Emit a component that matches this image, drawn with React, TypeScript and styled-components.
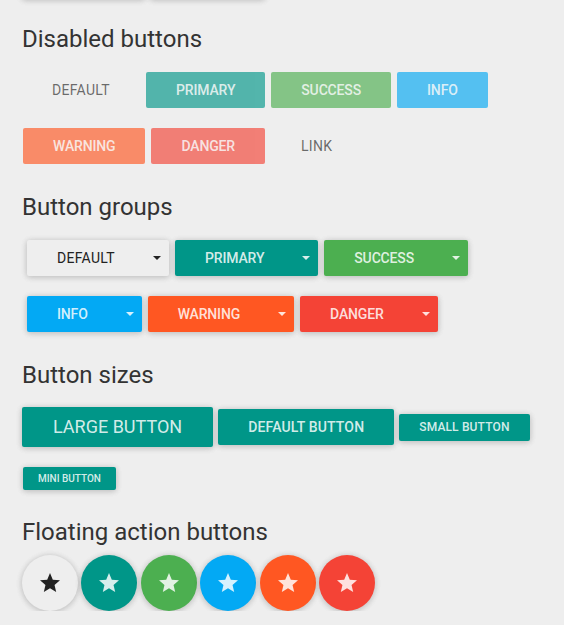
import styled, { createGlobalStyle } from "styled-components";

type Variant = "default" | "primary" | "success" | "info" | "warning" | "danger" | "link";
type Size = "lg" | "md" | "sm" | "xs";

const colors: Record<Variant, string> = {
  default: "#eeeeee",
  primary: "#009688",
  success: "#4caf50",
  info: "#03a9f4",
  warning: "#ff5722",
  danger: "#f44336",
  link: "transparent",
};

const isLight = (v: Variant) => v === "default" || v === "link";

const textColor = (v: Variant) => (isLight(v) ? "rgba(0, 0, 0, 0.87)" : "rgba(255, 255, 255, 0.84)");

// light buttons use a thinner, slightly tracked label
const labelFont = (v: Variant) =>
  isLight(v) ? "font-weight: 400; letter-spacing: 0.3px;" : "font-weight: 500; letter-spacing: -0.15px;";

const sizes: Record<Size, string> = {
  lg: "padding: 8px 31px; font-size: 18px; line-height: 24px; font-weight: 400; letter-spacing: 0;",
  md: "padding: 8px 30px; font-size: 14px; line-height: 20px;",
  sm: "padding: 5px 20px; font-size: 12px; line-height: 17px; letter-spacing: 0.15px;",
  xs: "padding: 4px 15px; font-size: 10px; line-height: 15px; letter-spacing: 0;",
};

const shadow = "0 1px 6px 0 rgba(0, 0, 0, 0.12), 0 1px 6px 0 rgba(0, 0, 0, 0.12)";

const GlobalStyle = createGlobalStyle`
  body {
    margin: 0;
    background: #eeeeee;
    font-family: Roboto, "Liberation Sans", sans-serif;
    overflow: hidden;
  }
`;

const Page = styled.div`
  display: flex;
  flex-direction: column;
  padding: 0 22px;
`;

const Heading = styled.h3<{ $top: number }>`
  margin: ${(p) => p.$top}px 0 0;
  font-size: 24px;
  font-weight: 400;
  line-height: 28px;
  color: #333333;
`;

const Row = styled.div<{ $top: number; $indent?: number; $gap?: number }>`
  display: flex;
  flex-wrap: wrap;
  align-items: center;
  gap: ${(p) => p.$gap ?? 6}px;
  margin-top: ${(p) => p.$top}px;
  padding-left: ${(p) => p.$indent ?? 0}px;
`;

// bottom edge of the previous section's buttons, scrolled just out of view
const ScrolledStub = styled.div<{ $w: number }>`
  width: ${(p) => p.$w}px;
  height: 36px;
  border-radius: 2px;
  background: #eeeeee;
  box-shadow: ${shadow};
`;

const Button = styled.button<{
  $variant: Variant;
  $flat?: boolean;
  $size?: Size;
  $off?: boolean;
  $tracked?: boolean;
}>`
  border: 0;
  border-radius: 2px;
  margin: 0;
  font-family: inherit;
  text-transform: uppercase;
  white-space: nowrap;
  cursor: pointer;
  ${(p) => labelFont(p.$variant)}
  ${(p) => sizes[p.$size ?? "md"]}
  ${(p) => (p.$tracked ? "letter-spacing: 0.15px;" : "")}
  background: ${(p) => (p.$flat ? "transparent" : colors[p.$variant])};
  color: ${(p) => textColor(p.$variant)};
  box-shadow: ${(p) => (p.$flat || p.$off ? "none" : shadow)};
  opacity: ${(p) => (p.$off ? 0.65 : 1)};
`;

const Group = styled.div<{ $variant: Variant }>`
  display: flex;
  border-radius: 2px;
  background: ${(p) => colors[p.$variant]};
  color: ${(p) => (isLight(p.$variant) ? "#222222" : "rgba(255, 255, 255, 0.84)")};
  box-shadow: ${shadow};
`;

const GroupMain = styled.span<{ $variant: Variant }>`
  padding: 8px 30px;
  font-size: 14px;
  line-height: 20px;
  text-transform: uppercase;
  ${(p) => labelFont(p.$variant)}
`;

const GroupToggle = styled.span`
  display: flex;
  align-items: center;
  justify-content: center;
  width: 24px;
`;

const Caret = styled.span`
  width: 0;
  height: 0;
  border-top: 4px solid currentColor;
  border-left: 4px solid transparent;
  border-right: 4px solid transparent;
`;

const Fab = styled.button<{ $variant: Variant }>`
  display: flex;
  align-items: center;
  justify-content: center;
  width: 56px;
  height: 56px;
  padding: 0;
  border: 0;
  border-radius: 50%;
  background: ${(p) => colors[p.$variant]};
  color: ${(p) => (p.$variant === "default" ? "#222222" : "rgba(255, 255, 255, 0.84)")};
  box-shadow: ${shadow};
`;

const Star = () => (
  <svg width="24" height="24" viewBox="0 0 24 24" fill="currentColor">
    <path d="M12 17.27L18.18 21l-1.64-7.03L22 9.24l-7.19-.61L12 2 9.19 8.63 2 9.24l5.46 4.73L5.82 21z" />
  </svg>
);

const groups1: Variant[] = ["default", "primary", "success"];
const groups2: Variant[] = ["info", "warning", "danger"];
const fabs: Variant[] = ["default", "primary", "success", "info", "warning", "danger"];

const SplitButton = ({ v }: { v: Variant }) => (
  <Group $variant={v}>
    <GroupMain $variant={v}>{v}</GroupMain>
    <GroupToggle>
      <Caret />
    </GroupToggle>
  </Group>
);

const App = () => {
  return (
    <>
      <GlobalStyle />
      <Page>
        <Row $top={-37} $gap={5}>
          <ScrolledStub $w={123} />
          <ScrolledStub $w={115} />
        </Row>

        <Heading $top={26}>Disabled buttons</Heading>
        <Row $top={19}>
          <Button $variant="default" $flat $off>Default</Button>
          <Button $variant="primary" $off>Primary</Button>
          <Button $variant="success" $off>Success</Button>
          <Button $variant="info" $off>Info</Button>
        </Row>
        <Row $top={20} $indent={1}>
          <Button $variant="warning" $off>Warning</Button>
          <Button $variant="danger" $off>Danger</Button>
          <Button $variant="link" $flat $off>Link</Button>
        </Row>

        <Heading $top={29}>Button groups</Heading>
        <Row $top={19} $indent={5}>
          {groups1.map((v) => (
            <SplitButton key={v} v={v} />
          ))}
        </Row>
        <Row $top={20} $indent={5}>
          {groups2.map((v) => (
            <SplitButton key={v} v={v} />
          ))}
        </Row>

        <Heading $top={29}>Button sizes</Heading>
        <Row $top={18} $gap={5}>
          <Button $variant="primary" $size="lg">Large button</Button>
          <Button $variant="primary" $tracked>Default button</Button>
          <Button $variant="primary" $size="sm">Small button</Button>
        </Row>
        <Row $top={20} $indent={1}>
          <Button $variant="primary" $size="xs">Mini button</Button>
        </Row>

        <Heading $top={28}>Floating action buttons</Heading>
        <Row $top={9} $gap={3.4}>
          {fabs.map((v) => (
            <Fab key={v} $variant={v}>
              <Star />
            </Fab>
          ))}
        </Row>
      </Page>
    </>
  );
};

export default App;
